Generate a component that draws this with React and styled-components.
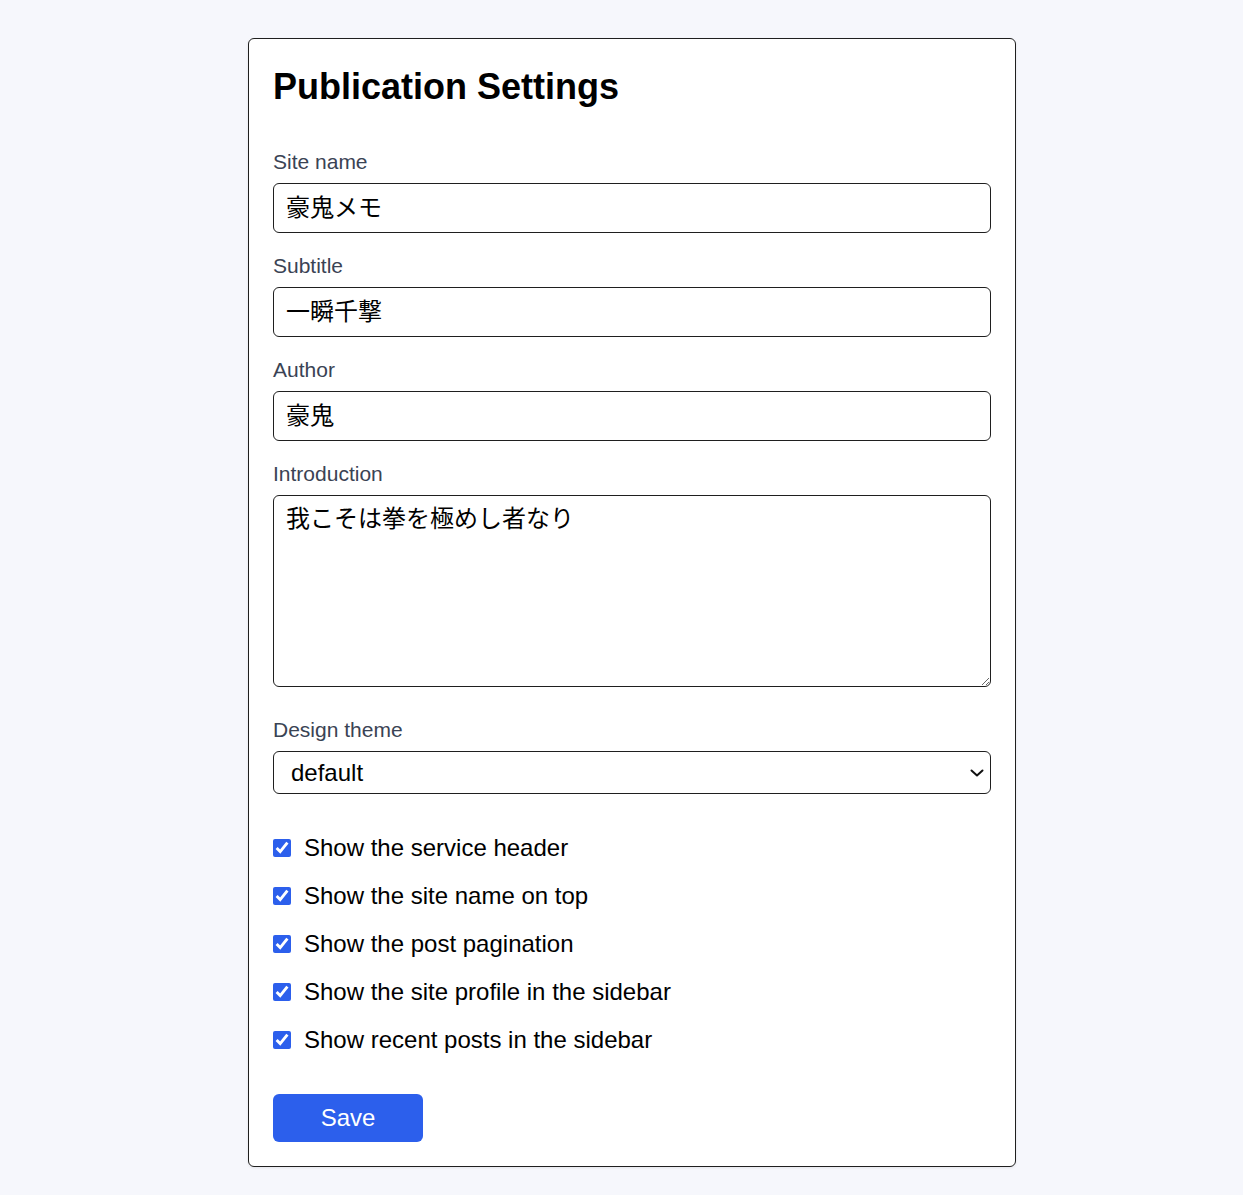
import React, { useState } from 'react';
import styled, { createGlobalStyle } from 'styled-components';

const colors = {
  page: '#f6f7fc',
  ink: '#000000',
  border: '#1f1f1f',
  label: '#3a4354',
  blue: '#2c5fec',
};

const GlobalStyle = createGlobalStyle`
  * { box-sizing: border-box; }
  html, body {
    margin: 0;
    background: ${colors.page};
  }
  body {
    font-family: "Liberation Sans", Arial, "Noto Sans CJK JP", sans-serif;
    color: ${colors.ink};
  }
`;

const Page = styled.div`
  padding: 38px 0 28px 21px;
`;

const Card = styled.form`
  width: 768px;
  margin: 0 auto;
  background: #fff;
  border: 1px solid ${colors.border};
  border-radius: 6px;
  padding: 24px;
  box-shadow: 0 1px 3px rgba(0, 0, 0, 0.08);
`;

const Title = styled.h1`
  margin: 3px 0 40px;
  font-size: 36px;
  line-height: 41px;
  font-weight: 700;
`;

const Field = styled.div`
  margin-bottom: ${(p) => p.$gap ?? 18}px;
`;

const Label = styled.label`
  display: block;
  font-size: 21px;
  line-height: 30px;
  color: ${colors.label};
  margin-bottom: 6px;
`;

const TextInput = styled.input`
  display: block;
  width: 100%;
  height: 50px;
  padding: 0 12px 6px;
  border: 1px solid ${colors.border};
  border-radius: 6px;
  font-family: "Liberation Sans", Arial, "Noto Sans CJK JP", sans-serif;
  font-size: 24px;
  color: ${colors.ink};
  background: #fff;
  outline: none;
`;

const TextArea = styled.textarea`
  display: block;
  width: 100%;
  height: 192px;
  padding: 8px 12px;
  border: 1px solid ${colors.border};
  border-radius: 6px;
  font-family: "Liberation Sans", Arial, "Noto Sans CJK JP", sans-serif;
  font-size: 24px;
  line-height: 30px;
  color: ${colors.ink};
  background: #fff;
  resize: vertical;
  outline: none;
`;

const SelectWrap = styled.div`
  position: relative;
`;

const Select = styled.select`
  display: block;
  width: 100%;
  height: 43px;
  padding: 0 40px 0 17px;
  border: 1px solid ${colors.border};
  border-radius: 6px;
  font-family: "Liberation Sans", Arial, sans-serif;
  font-size: 24px;
  color: ${colors.ink};
  background: #fff;
  appearance: none;
  outline: none;
`;

const Chevron = styled.svg`
  position: absolute;
  right: 7px;
  top: 50%;
  margin-top: -4px;
  width: 14px;
  height: 8px;
  pointer-events: none;
`;

const Options = styled.div`
  margin-top: 30px;
`;

const CheckRow = styled.label`
  display: flex;
  align-items: center;
  gap: 13px;
  height: 48px;
  font-size: 24px;
  cursor: pointer;
`;

const Check = styled.input`
  width: 18px;
  height: 18px;
  margin: 0;
  accent-color: ${colors.blue};
`;

const SaveButton = styled.button`
  display: block;
  margin-top: 30px;
  width: 150px;
  height: 48px;
  border: none;
  border-radius: 6px;
  background: ${colors.blue};
  color: #fff;
  font-family: "Liberation Sans", Arial, sans-serif;
  font-size: 24px;
  font-weight: 500;
  cursor: pointer;
`;

const toggles = [
  'Show the service header',
  'Show the site name on top',
  'Show the post pagination',
  'Show the site profile in the sidebar',
  'Show recent posts in the sidebar',
];

const App = () => {
  const [checked, setChecked] = useState(toggles.map(() => true));

  const flip = (i) =>
    setChecked((prev) => prev.map((v, j) => (j === i ? !v : v)));

  return (
    <Page>
      <GlobalStyle />
      <Card onSubmit={(e) => e.preventDefault()}>
        <Title>Publication Settings</Title>

        <Field>
          <Label htmlFor="site-name">Site name</Label>
          <TextInput id="site-name" defaultValue="豪鬼メモ" />
        </Field>
        <Field>
          <Label htmlFor="subtitle">Subtitle</Label>
          <TextInput id="subtitle" defaultValue="一瞬千撃" />
        </Field>
        <Field>
          <Label htmlFor="author">Author</Label>
          <TextInput id="author" defaultValue="豪鬼" />
        </Field>
        <Field $gap={28}>
          <Label htmlFor="intro">Introduction</Label>
          <TextArea id="intro" defaultValue="我こそは拳を極めし者なり" />
        </Field>

        <Field $gap={0}>
          <Label htmlFor="theme">Design theme</Label>
          <SelectWrap>
            <Select id="theme" defaultValue="default">
              <option value="default">default</option>
            </Select>
            <Chevron viewBox="0 0 14 8">
              <polyline
                points="1.5,1.5 7,6.5 12.5,1.5"
                fill="none"
                stroke="#111"
                strokeWidth="2"
                strokeLinecap="round"
                strokeLinejoin="round"
              />
            </Chevron>
          </SelectWrap>
        </Field>

        <Options>
          {toggles.map((text, i) => (
            <CheckRow key={text}>
              <Check
                type="checkbox"
                checked={checked[i]}
                onChange={() => flip(i)}
              />
              {text}
            </CheckRow>
          ))}
        </Options>

        <SaveButton type="submit">Save</SaveButton>
      </Card>
    </Page>
  );
};

export default App;
